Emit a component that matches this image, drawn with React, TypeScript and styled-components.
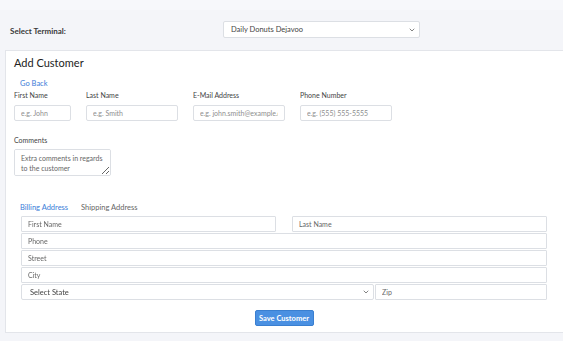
import styled, { createGlobalStyle } from 'styled-components';
import { ChevronDown } from 'lucide-react';

const GlobalStyle = createGlobalStyle`
  html, body {
    margin: 0;
    padding: 0;
    background: #f4f5f9;
    overflow: hidden;
  }
  * {
    box-sizing: border-box;
  }
  body {
    font-family: "Lato", "Open Sans", sans-serif;
    color: #444;
  }
`;

const Page = styled.div`
  width: 563px;
  height: 341px;
  background: linear-gradient(#f7f8fb 0, #f7f8fb 10px, #f4f5f9 10px);
`;

const TerminalBar = styled.div`
  display: flex;
  align-items: flex-start;
  height: 50px;
  padding: 21px 0 0 10px;
`;

const TerminalLabel = styled.div`
  width: 213px;
  margin-top: 5px;
  font-size: 8px;
  line-height: 10px;
  font-weight: 700;
  color: #3a3a3a;
`;

const SelectWrap = styled.div<{ $width: number; $height: number }>`
  position: relative;
  flex: none;
  width: ${(p) => p.$width}px;
  height: ${(p) => p.$height}px;
`;

const Select = styled.select<{ $pad?: number }>`
  display: block;
  appearance: none;
  width: 100%;
  height: 100%;
  margin: 0;
  padding: 0 0 0 ${(p) => p.$pad ?? 7}px;
  font-family: "Lato", sans-serif;
  font-size: 7.5px;
  color: #444;
  background: #fff;
  border: 1px solid #dcdfe4;
  border-radius: 2px;
  outline: none;
`;

const Chevron = styled(ChevronDown)`
  position: absolute;
  right: 4px;
  top: 50%;
  transform: translateY(-50%);
  color: #555;
  pointer-events: none;
`;

const Card = styled.div`
  margin-left: 5px;
  width: 600px;
  height: 283px;
  background: #fff;
  border: 1px solid #e3e5ea;
  padding: 5px 0 0 8px;
`;

const Title = styled.h2`
  margin: 0;
  font-size: 11px;
  line-height: 14px;
  font-weight: 400;
  color: #222;
`;

const BackLink = styled.a`
  display: inline-block;
  margin: 8px 0 0 6px;
  font-size: 7.5px;
  line-height: 10px;
  color: #3b7dd8;
  text-decoration: none;
`;

const FieldRow = styled.div`
  display: flex;
  gap: 15px;
  margin-top: 1px;
`;

const Field = styled.div<{ $width: number }>`
  display: flex;
  flex-direction: column;
  width: ${(p) => p.$width}px;
`;

const Label = styled.label`
  font-size: 7px;
  line-height: 10px;
  color: #444;
  margin-bottom: 5px;
`;

const TextInput = styled.input`
  display: block;
  width: 100%;
  height: 16px;
  margin: 0;
  padding: 0 6px;
  font-family: "Lato", sans-serif;
  font-size: 7px;
  color: #444;
  background: #fff;
  border: 1px solid #dcdfe4;
  border-radius: 2px;
  outline: none;
  &::placeholder {
    color: #8e8e8e;
  }
`;

const CommentsBlock = styled.div`
  display: flex;
  flex-direction: column;
  margin-top: 14px;
  width: 97px;
`;

const TextArea = styled.textarea`
  display: block;
  width: 97px;
  height: 27px;
  margin: -1px 0 0;
  padding: 3px 6px;
  font-family: "Lato", sans-serif;
  font-size: 7px;
  line-height: 10px;
  background: #fff;
  border: 1px solid #dcdfe4;
  border-radius: 2px;
  resize: vertical;
  outline: none;
  &::placeholder {
    color: #666;
  }
`;

const Address = styled.div`
  width: 526px;
  margin: 27px 0 0 7px;
`;

const Tabs = styled.div`
  display: flex;
  gap: 13px;
  margin-left: -1px;
`;

const Tab = styled.span<{ $active?: boolean }>`
  font-size: 7.5px;
  line-height: 10px;
  color: ${(p) => (p.$active ? '#3b7dd8' : '#666')};
`;

const AddressGrid = styled.div`
  display: flex;
  flex-direction: column;
  gap: 1px;
  margin-top: 3px;
`;

const AddressRow = styled.div<{ $gap: number }>`
  display: flex;
  height: 16px;
  gap: ${(p) => p.$gap}px;
`;

const AddressInput = styled(TextInput)<{ $grow?: boolean }>`
  flex: ${(p) => (p.$grow ? '1 1 0' : 'none')};
  min-width: 0;
  border-radius: 1px;
  &::placeholder {
    color: #666;
  }
`;

const ButtonRow = styled.div`
  display: flex;
  justify-content: center;
  margin-top: 10px;
`;

const SaveButton = styled.button`
  width: 59px;
  height: 16px;
  padding: 0;
  font-family: "Lato", sans-serif;
  font-size: 7.5px;
  font-weight: 700;
  color: #fff;
  background: #4a90e2;
  border: 1px solid #3a7fd0;
  border-radius: 2px;
`;

export default function App(): JSX.Element {
  return (
    <Page>
      <GlobalStyle />
      <TerminalBar>
        <TerminalLabel>Select Terminal:</TerminalLabel>
        <SelectWrap $width={197} $height={17}>
          <Select defaultValue="dd">
            <option value="dd">Daily Donuts Dejavoo</option>
          </Select>
          <Chevron size={8} strokeWidth={2.2} />
        </SelectWrap>
      </TerminalBar>

      <Card>
        <Title>Add Customer</Title>
        <BackLink href="#">Go Back</BackLink>

        <FieldRow>
          <Field $width={57}>
            <Label>First Name</Label>
            <TextInput placeholder="e.g. John" />
          </Field>
          <Field $width={92}>
            <Label>Last Name</Label>
            <TextInput placeholder="e.g. Smith" />
          </Field>
          <Field $width={92}>
            <Label>E-Mail Address</Label>
            <TextInput placeholder="e.g. john.smith@example.com" />
          </Field>
          <Field $width={92}>
            <Label>Phone Number</Label>
            <TextInput placeholder="e.g. (555) 555-5555" />
          </Field>
        </FieldRow>

        <CommentsBlock>
          <Label>Comments</Label>
          <TextArea placeholder="Extra comments in regards to the customer" />
        </CommentsBlock>

        <Address>
          <Tabs>
            <Tab $active>Billing Address</Tab>
            <Tab>Shipping Address</Tab>
          </Tabs>
          <AddressGrid>
            <AddressRow $gap={16}>
              <AddressInput $grow placeholder="First Name" />
              <AddressInput $grow placeholder="Last Name" />
            </AddressRow>
            <AddressInput placeholder="Phone" />
            <AddressInput placeholder="Street" />
            <AddressInput placeholder="City" />
            <AddressRow $gap={1}>
              <SelectWrap $width={353} $height={16}>
                <Select $pad={8} defaultValue="">
                  <option value="">Select State</option>
                </Select>
                <Chevron size={8} strokeWidth={2.2} />
              </SelectWrap>
              <AddressInput $grow placeholder="Zip" />
            </AddressRow>
          </AddressGrid>
          <ButtonRow>
            <SaveButton>Save Customer</SaveButton>
          </ButtonRow>
        </Address>
      </Card>
    </Page>
  );
}
